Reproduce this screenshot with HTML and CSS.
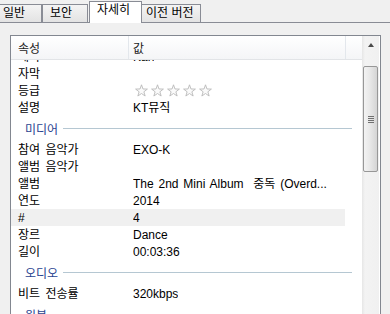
FILE: index.html
```html
<!DOCTYPE html>
<html lang="ko">
<head>
  <meta charset="UTF-8" />
  <title>속성 - 자세히</title>
  <link rel="stylesheet" href="styles.css">
</head>
<body>
  <div class="tabs">
    <div class="tab tab-general">일반</div>
    <div class="tab tab-security">보안</div>
    <div class="tab tab-details active">자세히</div>
    <div class="tab tab-prev">이전 버전</div>
  </div>

  <div class="panel">
    <div class="listview">
      <div class="content">
        <div class="head">
          <div class="hcell hname">속성</div>
          <div class="hcell hvalue">값</div>
          <div class="hcell hrest"></div>
        </div>
        <div class="rows">
          <div class="row first"><span class="name">제목</span><span class="value">Kan</span></div>
          <div class="row"><span class="name">자막</span><span class="value"></span></div>
          <div class="row">
            <span class="name">등급</span>
            <span class="value stars">
              <svg viewBox="0 0 13 13" width="13" height="13"><polygon points="6.5,0.8 7.97,4.98 12.4,5.08 8.88,7.77 10.14,12.02 6.5,9.5 2.86,12.02 4.12,7.77 0.6,5.08 5.03,4.98"/></svg>
              <svg viewBox="0 0 13 13" width="13" height="13"><polygon points="6.5,0.8 7.97,4.98 12.4,5.08 8.88,7.77 10.14,12.02 6.5,9.5 2.86,12.02 4.12,7.77 0.6,5.08 5.03,4.98"/></svg>
              <svg viewBox="0 0 13 13" width="13" height="13"><polygon points="6.5,0.8 7.97,4.98 12.4,5.08 8.88,7.77 10.14,12.02 6.5,9.5 2.86,12.02 4.12,7.77 0.6,5.08 5.03,4.98"/></svg>
              <svg viewBox="0 0 13 13" width="13" height="13"><polygon points="6.5,0.8 7.97,4.98 12.4,5.08 8.88,7.77 10.14,12.02 6.5,9.5 2.86,12.02 4.12,7.77 0.6,5.08 5.03,4.98"/></svg>
              <svg viewBox="0 0 13 13" width="13" height="13"><polygon points="6.5,0.8 7.97,4.98 12.4,5.08 8.88,7.77 10.14,12.02 6.5,9.5 2.86,12.02 4.12,7.77 0.6,5.08 5.03,4.98"/></svg>
            </span>
          </div>
          <div class="row"><span class="name">설명</span><span class="value">KT뮤직</span></div>

          <div class="group">미디어</div>
          <div class="row"><span class="name">참여 음악가</span><span class="value">EXO-K</span></div>
          <div class="row"><span class="name">앨범 음악가</span><span class="value"></span></div>
          <div class="row"><span class="name">앨범</span><span class="value">The 2nd Mini Album  중독 (Overd...</span></div>
          <div class="row"><span class="name">연도</span><span class="value">2014</span></div>
          <div class="row hot"><span class="name">#</span><span class="value">4</span></div>
          <div class="row"><span class="name">장르</span><span class="value">Dance</span></div>
          <div class="row"><span class="name">길이</span><span class="value">00:03:36</span></div>

          <div class="group">오디오</div>
          <div class="row"><span class="name">비트 전송률</span><span class="value">320kbps</span></div>

          <div class="group">원본</div>
        </div>
      </div>
      <div class="scrollbar">
        <div class="sb-up"><span class="arrow"></span></div>
        <div class="sb-gap"></div>
        <div class="sb-thumb"><span class="grip"></span></div>
        <div class="sb-track"></div>
      </div>
    </div>
  </div>
</body>
</html>
```

FILE: styles.css
```css
body {
  margin: 0;
  height: 314px;
  overflow: hidden;
  background-color: #f0f0f0;
  color: #000;
  font-family: "Liberation Sans", "Noto Sans CJK KR", sans-serif;
  font-size: 12px;
  word-spacing: 2px;
}

/* tab strip */
.tabs {
  display: flex;
  align-items: flex-end;
  height: 23px;
  border-bottom: 1px solid #898c95;
  box-sizing: border-box;
}
.tab {
  height: 18px;
  line-height: 16px;
  box-sizing: border-box;
  padding-left: 6px;
  border: 1px solid #898c95;
  border-bottom: none;
  background: linear-gradient(#f4f4f4, #e3e3e3);
  white-space: nowrap;
  word-spacing: 0;
}
.tab-general { width: 46px; margin-left: -4px; }
.tab-security { width: 46px; padding-left: 7px; }
.tab-details { width: 53px; margin-left: 1px; padding-left: 7px; }
.tab-prev { width: 59px; padding-left: 4px; border-left: none; }
.tab.active {
  height: 22px;
  line-height: 17px;
  margin-bottom: -1px;
  background: #fff;
  position: relative;
  z-index: 1;
}

/* list */
.panel {
  padding: 12px 0 0 10px;
}
.listview {
  display: flex;
  width: 371px;
  height: 280px;
  box-sizing: border-box;
  border: 1px solid #828790;
  border-bottom: none;
  background: #fff;
}
.content {
  width: 351px;
  display: flex;
  flex-direction: column;
}
.head {
  display: flex;
  height: 24px;
  box-sizing: border-box;
  border-bottom: 1px solid #e2e4e7;
  background: linear-gradient(#ffffff, #f4f5f7);
  position: relative;
  z-index: 1;
}
.hcell {
  line-height: 27px;
  color: #1c1c1c;
  box-sizing: border-box;
}
.hname { width: 118px; padding-left: 7px; border-right: 1px solid #e3e7ec; }
.hvalue { width: 217px; padding-left: 4px; border-right: 1px solid #e3e7ec; }
.hrest { flex: 1; }

.rows {
  flex: 1;
  overflow: hidden;
}
.row {
  display: flex;
  width: 334px;
  height: 17px;
  line-height: 18px;
  white-space: pre;
}
.row.first { margin-top: -12px; }
.row.hot { background: #f0f0f0; }
.name {
  width: 115px;
  padding-left: 7px;
  flex: none;
}
.value {
  overflow: hidden;
  word-spacing: 1.5px;
}
.stars {
  display: flex;
  align-items: center;
  gap: 3px;
  padding-left: 2px;
}
.stars svg polygon {
  fill: #fafafa;
  stroke: #b9b9b9;
  stroke-width: 0.9;
}

.group {
  display: flex;
  align-items: center;
  height: 25px;
  padding-left: 14px;
  margin-right: 10px;
  color: #2a4390;
}
.group::after {
  content: "";
  flex: 1;
  height: 1px;
  margin-left: 5px;
  background: #b5c7d2;
}

/* scrollbar */
.scrollbar {
  width: 17px;
  display: flex;
  flex-direction: column;
  background: linear-gradient(90deg, #e6e6e6, #f3f3f3 3px, #f0f0f0);
}
.sb-up {
  height: 17px;
  display: flex;
  justify-content: center;
  align-items: center;
}
.arrow {
  width: 0;
  height: 0;
  border-left: 3px solid transparent;
  border-right: 3px solid transparent;
  border-bottom: 4px solid #4a4a4a;
}
.sb-gap { height: 13px; }
.sb-thumb {
  height: 106px;
  margin: 0 1px 0 1px;
  box-sizing: border-box;
  border: 1px solid #979797;
  border-radius: 2px;
  background: linear-gradient(90deg, #f3f3f3, #e8e8e8 45%, #d4d4d4);
  display: flex;
  justify-content: center;
  align-items: center;
}
.grip {
  width: 6px;
  height: 7px;
  background: repeating-linear-gradient(#6f6f6f 0 1px, transparent 1px 2px);
}
.sb-track { flex: 1; }
```
